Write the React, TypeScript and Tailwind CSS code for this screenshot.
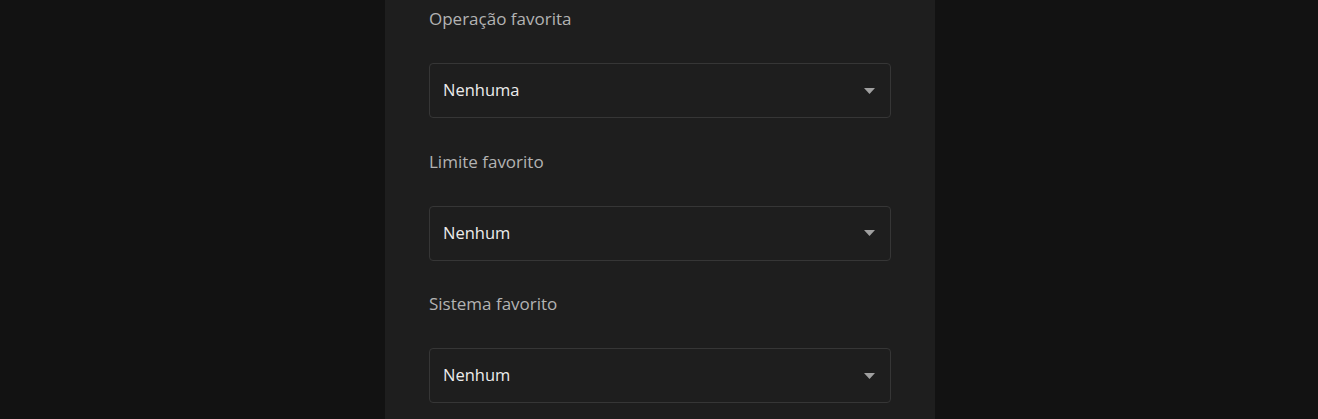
import React from 'react';

const fields = [
  { label: 'Operação favorita', value: 'Nenhuma' },
  { label: 'Limite favorito', value: 'Nenhum' },
  { label: 'Sistema favorito', value: 'Nenhum' },
];

// Select-like field with a caret on the right
const FakeSelect: React.FC<{ value: string }> = ({ value }) => (
  <div className="flex items-center justify-between h-[55px] px-[13px] border border-[#363636] rounded-[4px] bg-[#1e1e1e]">
    <span className="text-[16.5px] text-[#ececec]">{value}</span>
    <svg width="11" height="6" viewBox="0 0 11 6" className="mr-[2px]">
      <path d="M0 0 L11 0 L5.5 6 Z" fill="#a0a0a0" />
    </svg>
  </div>
);

export default function App() {
  return (
    <div
      className="w-full h-[419px] bg-[#121212] flex justify-center overflow-hidden pl-[2px]"
      style={{ fontFamily: '"Open Sans", "Noto Sans", sans-serif' }}
    >
      <div className="w-[550px] h-full bg-[#1e1e1e] px-[44px] pt-[7px]">
        {fields.map((f, i) => (
          <div key={f.label} className={i > 0 ? 'mt-[31.5px]' : ''}>
            <div className="h-[24px] leading-[24px] text-[17px] text-[#b3b3b3]">{f.label}</div>
            <div className="mt-[32px]">
              <FakeSelect value={f.value} />
            </div>
          </div>
        ))}
      </div>
    </div>
  );
}
